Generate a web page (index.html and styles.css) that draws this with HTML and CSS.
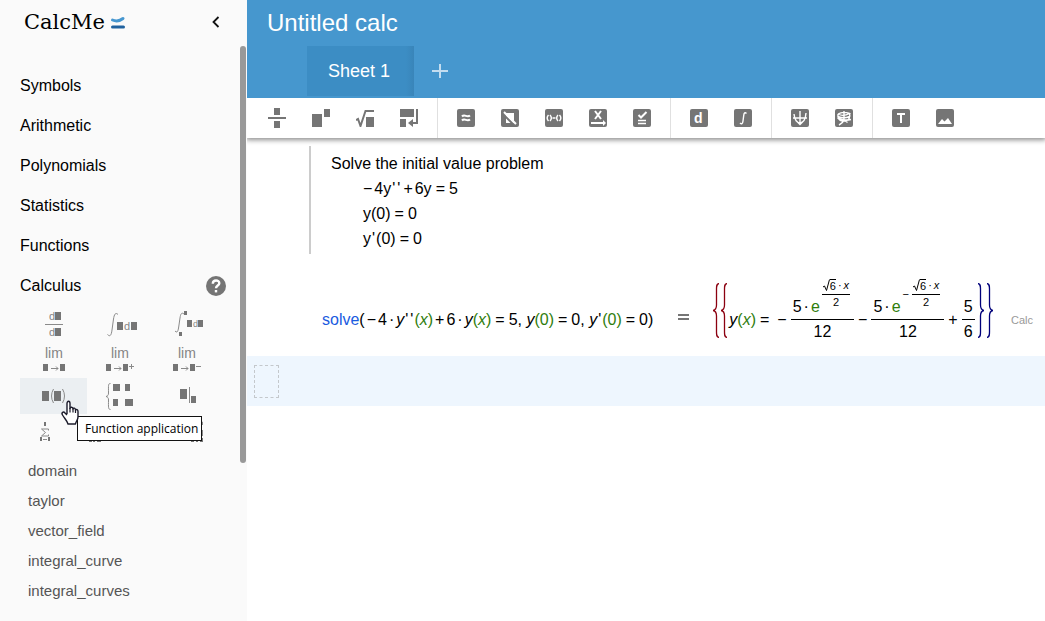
FILE: index.html
```html
<!DOCTYPE html>
<html lang="en">
<head>
<meta charset="utf-8">
<title>CalcMe</title>
<link rel="stylesheet" href="styles.css">
</head>
<body>
<div class="app">
  <aside class="sidebar">
    <div class="brand">
      <span class="brand-name">CalcMe</span>
      <svg class="brand-mark" width="16" height="16" viewBox="0 0 16 16"><path d="M2.500 6Q8 8.400 13 4.500" fill="none" stroke="#4697d0" stroke-width="3" stroke-linecap="round"/><path d="M2.500 13H13.500" stroke="#20629f" stroke-width="3" stroke-linecap="round"/></svg>
      <button class="collapse" aria-label="Collapse menu"><svg width="10" height="14" viewBox="0 0 10 14"><path d="M7.500 2L2.500 7L7.500 12" fill="none" stroke="#111" stroke-width="1.8"/></svg></button>
    </div>
    <nav class="menu">
      <button class="section">Symbols</button>
      <button class="section">Arithmetic</button>
      <button class="section">Polynomials</button>
      <button class="section">Statistics</button>
      <button class="section">Functions</button>
      <div class="open-section">
        <button class="section">Calculus</button>
        <button class="help" aria-label="Help"><svg width="20" height="20" viewBox="0 0 20 20"><circle cx="10" cy="10" r="10" fill="#757575"/><path d="M6.800 7.800C6.800 3.300 13.300 3.500 13.300 7.300C13.300 9.600 10 9.500 10 12.200" fill="none" stroke="#fff" stroke-width="2.400"/><rect x="8.800" y="14" width="2.400" height="2.400" fill="#fff"/></svg></button>
      </div>
    </nav>
    <div class="palette">
      <button class="symbol" aria-label="Derivative"><svg width="67" height="36" viewBox="0 0 67 36"><text x="29" y="14" font-size="11">d</text><path d="M35 6h6v8h-6zM35 22h6v8h-6z"/><path class="line" d="M25 18.500H43"/><text x="29" y="30" font-size="11">d</text></svg></button>
      <button class="symbol" aria-label="Integral"><svg width="67" height="36" viewBox="0 0 67 36"><path class="line" d="M31 8.500C28.500 6 27.200 8.500 26.500 13L25 24C24.300 29.500 23 31 20.500 28.500"/><path d="M30 16h6v8h-6zM44 16h6v8h-6z"/><text x="37" y="24" font-size="11">d</text></svg></button>
      <button class="symbol" aria-label="Definite integral"><svg width="67" height="36" viewBox="0 0 67 36"><path class="line" d="M30 8C27.500 6 26.600 8 26 12L24.700 21C24 26 23 27 21 25"/><path d="M30 5h3v4h-3zM25 26h3v4h-3zM33 14h5v7h-5zM44 14h5v7h-5z"/><text x="39" y="21" font-size="9">d</text></svg></button>
      <button class="symbol" aria-label="Limit"><svg width="67" height="36" viewBox="0 0 67 36"><text x="25" y="16" font-size="14">lim</text><path d="M23 22h5v7h-5zM40 22h5v7h-5z"/><path class="line" d="M31 26.500H38M36 24.500L38 26.500L36 28.500"/></svg></button>
      <button class="symbol" aria-label="Right limit"><svg width="67" height="36" viewBox="0 0 67 36"><text x="24" y="16" font-size="14">lim</text><path d="M19 22h5v7h-5zM36 22h5v7h-5z"/><path class="line" d="M27 26.500H34M32 24.500L34 26.500L32 28.500M42 24.500H47M44.500 22V27"/></svg></button>
      <button class="symbol" aria-label="Left limit"><svg width="67" height="36" viewBox="0 0 67 36"><text x="24" y="16" font-size="14">lim</text><path d="M19 22h5v7h-5zM36 22h5v7h-5z"/><path class="line" d="M27 26.500H34M32 24.500L34 26.500L32 28.500M42 24.500H47"/></svg></button>
      <button class="symbol hovered" aria-label="Function application"><svg width="67" height="36" viewBox="0 0 67 36"><path d="M22 13h7v10h-7zM34 13h7v10h-7z"/><path class="line" d="M33.500 11Q29.500 18 33.500 25M42.500 11Q46.500 18 42.500 25"/></svg></button>
      <button class="symbol" aria-label="Piecewise function"><svg width="67" height="36" viewBox="0 0 67 36"><path class="line" d="M23.500 5.500C21 5.500 21.500 7 21.500 15C21.500 17 21 18 19 18.500C21 19 21.500 20 21.500 22C21.500 29 21 31.500 23.500 31.500"/><path d="M26 6h7v7h-7zM38 6h5v7h-5zM26 21h5v7h-5zM38 21h8v7h-8z"/></svg></button>
      <button class="symbol" aria-label="Evaluate at"><svg width="67" height="36" viewBox="0 0 67 36"><path d="M26 11h7v10h-7zM37 18h5v7h-5z"/><path class="line" d="M35.500 9V25"/></svg></button>
      <button class="symbol" aria-label="Sum"><svg width="67" height="36" viewBox="0 0 67 36"><path d="M24 8h2v4h-2zM20 23h2v4h-2zM28 23h2v4h-2z"/><path class="line" d="M28.500 16.500V15H21.500L25.500 18.500L21.500 22H28.500V20.500M23 25.500H27"/></svg></button>
      <button class="symbol" aria-label="Product"><svg width="67" height="36" viewBox="0 0 67 36"><path d="M2 24h3v4h-3zM6 24h2v4h-2zM10 24h4v4h-4z"/></svg></button>
      <button class="symbol" aria-label="Matrix"><svg width="67" height="36" viewBox="0 0 67 36"><path d="M37 24h3v4h-3zM42 24h2v4h-2zM46 24h3v4h-3z"/><path class="line" d="M46 8H48.500V11M48.500 16V22"/></svg></button>
    </div>
    <div class="commands">
      <button class="command">domain</button>
      <button class="command">taylor</button>
      <button class="command">vector_field</button>
      <button class="command">integral_curve</button>
      <button class="command">integral_curves</button>
    </div>
    <div class="scroll-thumb"></div>
    <div class="tooltip" role="tooltip">Function application</div>
    <svg class="pointer" width="20" height="26" viewBox="0 0 20 26"><path d="M7 14V3.500C7 .5 10 .5 10 3.500V8.500C10 6.500 13 7 13 9C13.500 7.500 15.500 8 15.500 10C16.500 9 18 9.500 18 11.500V17C18 20 16 21 15.500 24H8C7 20.500 4.500 18.500 2.500 15C1 12.500 3.500 11 5 13L7 15" fill="#fff" stroke="#1b1b2b" stroke-width="1.400" stroke-linejoin="round"/><path d="M10 8V12.500M13 9V12.500M15.500 10V13" stroke="#1b1b2b" stroke-width="1.200"/></svg>
  </aside>

  <main class="main">
    <header class="header">
      <h1 class="title">Untitled calc</h1>
      <div class="tabs">
        <button class="tab">Sheet 1</button>
        <button class="add-tab" aria-label="Add sheet"><svg width="16" height="16" viewBox="0 0 16 16"><path d="M0 8H16M8 1V15" stroke="#c3ddf0" stroke-width="2"/></svg></button>
      </div>
    </header>
    <div class="toolbar">
      <div class="group">
        <button class="tool" aria-label="Fraction"><svg width="18" height="20" viewBox="0 0 18 20"><path d="M6 0h6v7h-6zM0 9h18v2H0zM6 13h6v7h-6z"/></svg></button>
        <button class="tool" aria-label="Power"><svg width="18" height="18" viewBox="0 0 18 18"><path d="M0 5h10v13H0zM12 0h6v8h-6z"/></svg></button>
        <button class="tool" aria-label="Square root"><svg width="18" height="18" viewBox="0 0 18 18"><path d="M10 8h8v10h-8z"/><path d="M0 11L2 10L4.500 17L9.500 2H18" fill="none" stroke="#757575" stroke-width="2"/></svg></button>
        <button class="tool" aria-label="New line"><svg width="18" height="18" viewBox="0 0 18 18"><path d="M0 0h14v8H0zM0 10h6v8H0zM8 14l5-4v3h3V0h2v15h-5v3z"/></svg></button>
      </div>
      <div class="group">
        <button class="tool" aria-label="Approximate"><svg width="18" height="18" viewBox="0 0 18 18"><rect width="18" height="18" rx="2"/><path class="mark" d="M5 7.500C7.500 4.500 10 9 13 6.500M5 11.500C7.500 8.500 10 13 13 10.500"/></svg></button>
        <button class="tool" aria-label="Hide"><svg width="18" height="18" viewBox="0 0 18 18"><rect width="18" height="18" rx="2"/><path d="M5 4H13V14H5z" fill="#fff"/><path d="M2 5L14 17" stroke="#757575" stroke-width="2"/><path class="mark" d="M3 3L15 15"/></svg></button>
        <button class="tool" aria-label="Factor"><svg width="18" height="18" viewBox="0 0 18 18"><rect width="18" height="18" rx="2"/><path class="mark thin" d="M3.500 6Q.8 9 3.500 12M5 6Q7.700 9 5 12M13 6Q10.300 9 13 12M14.500 6Q17.200 9 14.500 12M7.500 9H10.500"/></svg></button>
        <button class="tool" aria-label="Vector"><svg width="18" height="18" viewBox="0 0 18 18"><rect width="18" height="18" rx="2"/><path class="mark" d="M6 2L12 10M12 2L6 10M2 14H15"/><path d="M14 11L17 14L14 17z" fill="#fff"/></svg></button>
        <button class="tool" aria-label="Check"><svg width="18" height="18" viewBox="0 0 18 18"><rect width="18" height="18" rx="2"/><path class="mark" d="M5.500 6L8 8.500L13.500 3"/><path class="mark thin" d="M5 11.500H13M5 14.500H13"/></svg></button>
      </div>
      <div class="group">
        <button class="tool" aria-label="Differentiate"><svg width="18" height="18" viewBox="0 0 18 18"><rect width="18" height="18" rx="2"/><text class="mark-text" x="4" y="14" font-size="14">d</text></svg></button>
        <button class="tool" aria-label="Integrate"><svg width="18" height="18" viewBox="0 0 18 18"><rect width="18" height="18" rx="2"/><path class="mark thin" d="M12.500 4.500C11 3 10 4 9.800 6L9 12C8.700 15 7.500 15.500 6 14"/></svg></button>
      </div>
      <div class="group">
        <button class="tool" aria-label="Plot"><svg width="18" height="18" viewBox="0 0 18 18"><rect width="18" height="18" rx="2"/><path class="mark thin" d="M9 2V15M2 9H16M3 5C4 17 14 17 15 4M6.500 13L9 15.500L11.500 13"/></svg></button>
        <button class="tool" aria-label="Plot in space"><svg width="18" height="18" viewBox="0 0 18 18"><rect width="18" height="18" rx="2"/><path class="mark thin" d="M3 5C1.500 14 12 13 14 9.500C15 8 15 6 14.500 4.500M3 5Q8 8 14.500 4.500Q8 2 3 5M9 2V11M2.500 9Q9 12 16 10.500M9 11Q8 14 4 16M3 7.500Q9 10 14.500 7.500M9 11L12.500 13.500"/></svg></button>
      </div>
      <div class="group">
        <button class="tool" aria-label="Text"><svg width="18" height="18" viewBox="0 0 18 18"><rect width="18" height="18" rx="2"/><path d="M5 4h8v2h-3v8H8V6H5z" fill="#fff"/></svg></button>
        <button class="tool" aria-label="Image"><svg width="18" height="18" viewBox="0 0 18 18"><rect width="18" height="18" rx="2"/><path d="M2 15L6 10L8.500 12.500L12 9L16 15z" fill="#fff"/></svg></button>
      </div>
    </div>

    <div class="sheet">
      <section class="note">
        <p class="line-text">Solve the initial value problem</p>
        <p class="line-text math"><span class="op-tight">−</span>4y<span class="prime">'</span><span class="prime">'</span><span class="op-tight">+</span>6y<span class="op">=</span>5</p>
        <p class="line-text math">y(0)<span class="op">=</span>0</p>
        <p class="line-text math">y<span class="prime">'</span>(0)<span class="op">=</span>0</p>
      </section>
      <section class="calc">
        <div class="expr"><span class="command-name">solve</span>(<span class="op-tight">−</span>4<span class="dot">·</span><i>y</i><span class="prime">'</span><span class="prime">'</span><span class="arg">(<i>x</i>)</span><span class="op-tight">+</span>6<span class="dot">·</span><i>y</i><span class="arg">(<i>x</i>)</span><span class="op">=</span>5, <i>y</i><span class="arg">(0)</span><span class="op">=</span>0, <i>y</i><span class="prime">'</span><span class="arg">(0)</span><span class="op">=</span>0)</div>
        <button class="equals" aria-label="Evaluate"><svg width="11" height="6" viewBox="0 0 11 6"><path d="M0 1H11M0 5H11" stroke="#757575" stroke-width="2"/></svg></button>
        <div class="result">
          <svg class="brace open" width="6" height="55" viewBox="0 0 6 55"><path d="M6 .5C3.500 1 3.500 3 3.500 6V22C3.500 25 3 27 0 27.500C3 28 3.500 30 3.500 33V49C3.500 52 3.500 54 6 54.500"/></svg>
          <svg class="brace open" width="6" height="55" viewBox="0 0 6 55"><path d="M6 .5C3.500 1 3.500 3 3.500 6V22C3.500 25 3 27 0 27.500C3 28 3.500 30 3.500 33V49C3.500 52 3.500 54 6 54.500"/></svg>
          <span class="term"><i>y</i><span class="arg">(<i>x</i>)</span><span class="op">=</span></span>
          <span class="term sign">−</span>
          <span class="frac">
            <span class="num"><span>5<span class="dot">·</span><span class="const">e</span></span>
              <span class="exp"><span class="frac small"><span class="num"><svg width="7" height="13" viewBox="0 0 7 13"><path d="M0 8L1.500 7L3.500 11.500L6.500 .5" fill="none" stroke="#000"/></svg><span class="root">6</span><span class="dot">·</span><i>x</i></span><span class="den">2</span></span></span>
            </span>
            <span class="den">12</span>
          </span>
          <span class="term sign">−</span>
          <span class="frac">
            <span class="num"><span>5<span class="dot">·</span><span class="const">e</span></span>
              <span class="exp"><span class="minus">−</span><span class="frac small"><span class="num"><svg width="7" height="13" viewBox="0 0 7 13"><path d="M0 8L1.500 7L3.500 11.500L6.500 .5" fill="none" stroke="#000"/></svg><span class="root">6</span><span class="dot">·</span><i>x</i></span><span class="den">2</span></span></span>
            </span>
            <span class="den">12</span>
          </span>
          <span class="term sign">+</span>
          <span class="frac"><span class="num">5</span><span class="den">6</span></span>
          <svg class="brace close" width="6" height="55" viewBox="0 0 6 55"><path d="M0 .5C2.500 1 2.500 3 2.500 6V22C2.500 25 3 27 6 27.500C3 28 2.500 30 2.500 33V49C2.500 52 2.500 54 0 54.500"/></svg>
          <svg class="brace close" width="6" height="55" viewBox="0 0 6 55"><path d="M0 .5C2.500 1 2.500 3 2.500 6V22C2.500 25 3 27 6 27.500C3 28 2.500 30 2.500 33V49C2.500 52 2.500 54 0 54.500"/></svg>
        </div>
        <span class="mode">Calc</span>
      </section>
      <section class="entry"><input class="entry-box" type="text" aria-label="Expression"></section>
    </div>
  </main>
</div>
</body>
</html>
```

FILE: styles.css
```css
* { box-sizing: border-box; }
body { margin: 0; background: #fff; color: #000; font: 16px/20px "Liberation Sans", Arial, sans-serif; }
button { margin: 0; padding: 0; border: 0; background: none; color: inherit; font: inherit; text-align: left; }
svg { display: block; flex: none; }
.app { display: flex; min-height: 100vh; }

.sidebar { position: relative; flex: none; width: 247px; background: #fafafa; }
.brand { display: flex; align-items: center; height: 44px; padding: 0 24px; }
.brand-name { font: 21px/24px "DejaVu Serif", serif; }
.brand-mark { margin-left: 5px; }
.collapse { margin-left: auto; padding: 0 2px; }
.menu { display: flex; flex-direction: column; padding-top: 22px; }
.section { flex: 1; height: 40px; min-height: 40px; padding-left: 20px; }
.open-section { display: flex; align-items: center; padding-right: 21px; }
.palette { display: grid; grid-template-columns: repeat(3, 67px); padding: 0 20px; }
.symbol { height: 36px; }
.symbol svg { fill: #757575; font-family: "Liberation Sans", Arial, sans-serif; }
.symbol text { fill: #858585; }
.symbol .line { fill: none; stroke: #8a8a8a; }
.hovered { background: #ebeff2; }
.commands { display: flex; flex-direction: column; padding-top: 6px; }
.command { height: 30px; padding-left: 28px; color: #555; font-size: 15px; }
.scroll-thumb { position: absolute; top: 46px; right: 1px; width: 6px; height: 417px; border-radius: 3px; background: #999; }
.tooltip { position: absolute; top: 416px; left: 77px; padding: 3px 3px 3px 7px; border: 1px solid #111; background: #fff; font: 12px/17px "Open Sans", sans-serif; white-space: nowrap; }
.pointer { position: absolute; top: 400px; left: 60px; }

.main { display: flex; flex: 1; flex-direction: column; min-width: 0; }
.header { background: #4697ce; color: #fff; }
.title { margin: 0; padding: 8px 20px; font-size: 24px; font-weight: 400; line-height: 30px; }
.tabs { display: flex; padding: 0 60px 2px; }
.tab { height: 50px; padding: 0 24px 0 21px; background: linear-gradient(to left, #3985b9, #3c8dc4 8px); font-size: 18px; }
.add-tab { padding: 0 18px; }
.toolbar { position: relative; display: flex; height: 40px; padding-left: 2px; background: #fff; box-shadow: 0 1px 5px 1px rgba(0, 0, 0, 0.45); clip-path: inset(0 0 -12px 0); }
.group { display: flex; padding: 0 6px; border-right: 1px solid #e0e0e0; }
.group:last-child { border: 0; }
.tool { display: flex; align-items: center; justify-content: center; width: 44px; }
.tool svg { fill: #757575; }
.tool .mark { fill: none; stroke: #fff; stroke-width: 2; }
.tool .thin { stroke-width: 1.4; }
.tool .mark-text { fill: #fff; font-family: "Liberation Sans", Arial, sans-serif; font-weight: 700; }

.sheet { padding-top: 8px; }
.note { margin-left: 62px; padding: 5px 0 3px 20px; border-left: 2px solid #ccc; }
.line-text { margin: 0; line-height: 25px; }
.math { padding-left: 32px; }
.math .op-tight:first-child { padding-left: 0; }
.op { padding: 0 4px; }
.op-tight { padding: 0 2px; }
.prime { padding: 0 1px; }
.dot { padding: 0 2px; }
.calc { display: flex; align-items: flex-end; padding: 24px 12px 14px 75px; white-space: nowrap; }
.expr, .term, .equals, .mode { margin-bottom: 12px; }
.command-name { color: #1a5be0; }
.arg, .const { color: #2f7d0c; }
.equals { display: flex; align-items: center; height: 26px; margin-left: 25px; }
.result { display: flex; align-items: flex-end; margin-left: 24px; }
.brace { margin: 0 2px 4px 0; fill: none; stroke-width: 1.3; }
.open { stroke: #8b0010; }
.close { margin: 0 0 4px 3px; stroke: #00007a; }
.sign { padding: 0 4px; }
.frac { display: flex; flex-direction: column; }
.num { display: flex; align-items: flex-end; justify-content: center; padding: 0 2px 2px; border-bottom: 1px solid #000; }
.den { padding-top: 2px; line-height: 20px; text-align: center; }
.exp { display: flex; align-items: center; margin: 0 2px 8px; font-size: 11px; line-height: 14px; }
.minus { padding-right: 3px; }
.small .num { padding: 0 1px 2px; }
.small .den { padding-top: 0; line-height: 14px; }
.root { border-top: 1px solid #000; line-height: 12px; }
.mode { margin-left: auto; color: #999; font-size: 11px; }
.entry { display: flex; align-items: center; height: 50px; padding-left: 7px; background: #eef6fe; }
.entry-box { width: 25px; height: 33px; padding: 0; border: 1px dashed #c4c8cc; background: none; }
```
